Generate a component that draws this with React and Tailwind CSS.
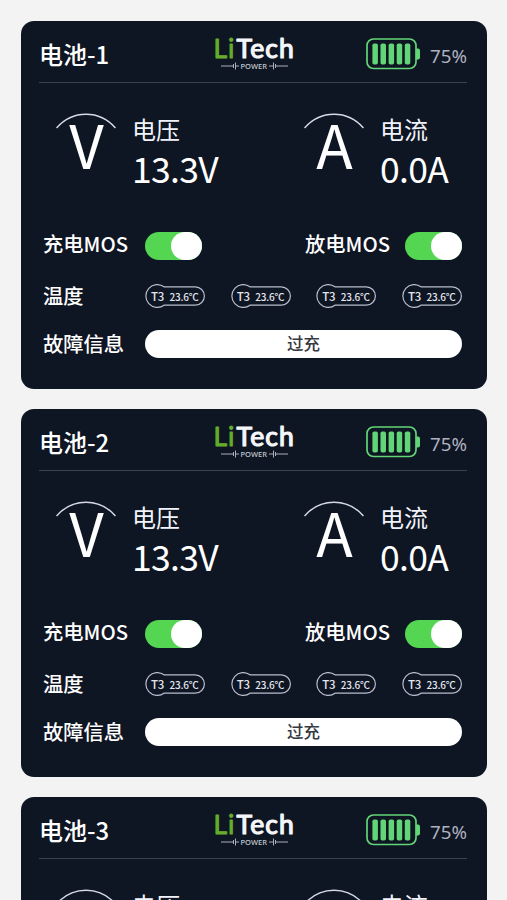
const BATTERIES = [
  { id: 1, charge: 75, voltage: "13.3V", current: "0.0A" },
  { id: 2, charge: 75, voltage: "13.3V", current: "0.0A" },
  { id: 3, charge: 75, voltage: "13.3V", current: "0.0A" },
];

const SENSORS = [
  { label: "T3", value: "23.6℃" },
  { label: "T3", value: "23.6℃" },
  { label: "T3", value: "23.6℃" },
  { label: "T3", value: "23.6℃" },
];

function Logo() {
  return (
    <svg width="84" height="40" viewBox="0 0 84 40" className="block overflow-visible">
      <g className="font-['Lato'] font-normal" fontSize="26.5" strokeLinejoin="round">
        <text x="0.5 15" y="24.5" fill="#66ad2b" stroke="#66ad2b" strokeWidth="0.9">
          Li
        </text>
        <text x="23.5 37.2 52.3 66" y="24.5" fill="#f5f6fa" stroke="#f5f6fa" strokeWidth="1.2">
          Tech
        </text>
      </g>
      <g stroke="#a9afbc" strokeWidth="1" fill="none">
        <path d="M8 33H20M20.5 31V35M22.5 29.5V36.5M22.5 33H26" />
        <path d="M56 33H60M60.5 29.5V36.5M62.5 31V35M63 33H75" />
      </g>
      <text
        x="27.5"
        y="35.5"
        fontSize="7.2"
        textLength="26.5"
        lengthAdjust="spacingAndGlyphs"
        fill="#c3c7d0"
        className="font-['Noto_Sans'] font-medium"
      >
        POWER
      </text>
    </svg>
  );
}

function BatteryIcon() {
  return (
    <svg width="54" height="32" viewBox="0 0 54 32" className="block" fill="#62d576">
      <rect x="1" y="1" width="49" height="29.5" rx="6.5" fill="none" stroke="#62d576" strokeWidth="1.7" />
      <rect x="6.4" y="5.5" width="5.5" height="21" rx="1.8" />
      <rect x="14.5" y="5.5" width="5.5" height="21" rx="1.8" />
      <rect x="22.6" y="5.5" width="5.5" height="21" rx="1.8" />
      <rect x="30.7" y="5.5" width="5.5" height="21" rx="1.8" />
      <rect x="38.8" y="5.5" width="5.5" height="21" rx="1.8" />
      <path d="M50 10.5h2a2 2 0 0 1 2 2v7a2 2 0 0 1-2 2h-2z" />
    </svg>
  );
}

function Meter({ symbol, label, value }) {
  return (
    <div className="flex">
      <div className="w-[60px]">
        <svg width="60" height="16" viewBox="0 0 60 16" className="block" fill="none">
          <path d="M0.5 15Q12.5 1.2 30 1.2T59.5 15" stroke="#d5d9e8" strokeWidth="1.5" />
        </svg>
        <div className="-mt-[30px] pl-[1px] text-center text-[60px] leading-[88px]">{symbol}</div>
      </div>
      <div className="ml-[17px]">
        <div className="-mt-[2px] -ml-[1px] text-[24px] leading-[36px] text-[#f1f3fa]">{label}</div>
        <div className="-mt-[5px] -ml-[1px] text-[35.5px] leading-[52px] tracking-[-0.7px]">
          {value}
        </div>
      </div>
    </div>
  );
}

function Toggle() {
  return (
    <div className="flex h-[28px] w-[57px] items-center justify-end rounded-full bg-[#55d653]">
      <div className="h-[28px] w-[31px] rounded-full bg-white" />
    </div>
  );
}

function Sensor({ label, value }) {
  return (
    <div className="relative h-[24px] w-[60px]">
      <svg width="60" height="24" viewBox="0 0 60 24" className="absolute inset-0" fill="none">
        <path
          d="M19 2.8H50.2a9.2 9.2 0 0 1 0 18.4H19A11.4 11.4 0 1 1 19 2.8Z"
          stroke="#b9bdce"
          strokeWidth="1.2"
        />
      </svg>
      <div className="relative flex h-full items-baseline pt-[4px] pl-[6px] leading-[17px] font-medium text-[#e4e6ee]">
        <span className="w-[18.5px] text-[11.5px] tracking-[-0.3px]">{label}</span>
        <span className="text-[10px] tracking-[-0.2px]">{value}</span>
      </div>
    </div>
  );
}

function BatteryCard({ battery }) {
  return (
    <section className="h-[368px] w-[466px] shrink-0 rounded-[13px] bg-[#0e1523] pr-[20px] pl-[18px] text-white">
      <header className="grid h-[62px] grid-cols-[1fr_auto_1fr] items-center border-b border-[#3c4250]">
        <h2 className="mt-[5px] text-[24px] leading-[36px] font-medium">
          电池-{battery.id}
        </h2>
        <div className="mt-[3px] ml-[3px]">
          <Logo />
        </div>
        <div className="mt-[5px] flex items-center justify-end">
          <BatteryIcon />
          <span className="mt-[4px] ml-[10px] font-['Noto_Sans'] text-[18.7px] leading-[26px] text-[#aeb2bf]">
            {battery.charge}%
          </span>
        </div>
      </header>

      <div className="flex h-[129px] pt-[30px] pl-[17px]">
        <div className="w-[248px]">
          <Meter symbol="V" label="电压" value={battery.voltage} />
        </div>
        <Meter symbol="A" label="电流" value={battery.current} />
      </div>

      <div className="-mr-[2px] pr-[7px] pl-[4px] text-[20.3px] leading-[30px] font-medium">
        <div className="mt-[20px] flex items-center">
          <span className="-mt-[5px] w-[102px]">充电MOS</span>
          <Toggle />
          <span className="-mt-[5px] ml-auto w-[100px]">放电MOS</span>
          <Toggle />
        </div>
        <div className="mt-[23px] flex items-center">
          <span className="-mt-[3px] w-[102px]">温度</span>
          <div className="flex flex-1 justify-between">
            {SENSORS.map((sensor, i) => (
              <Sensor key={i} label={sensor.label} value={sensor.value} />
            ))}
          </div>
        </div>
        <div className="mt-[20px] flex items-center">
          <span className="-mt-[2px] w-[102px]">故障信息</span>
          <div className="h-[28px] flex-1 rounded-full bg-white text-center text-[16.5px] leading-[26px] text-[#353941]">
            过充
          </div>
        </div>
      </div>
    </section>
  );
}

export default function App() {
  return (
    <main className="flex h-screen flex-col gap-[20.3px] overflow-hidden bg-[#f3f3f3] pt-[20.5px] pl-[21px] font-['Noto_Sans_CJK_SC',sans-serif]">
      {BATTERIES.map((battery) => (
        <BatteryCard key={battery.id} battery={battery} />
      ))}
    </main>
  );
}
